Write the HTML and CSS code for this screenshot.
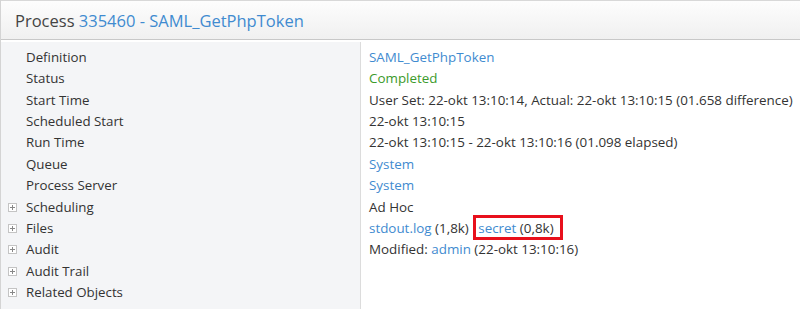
FILE: index.html
```html
<!DOCTYPE html>
<html lang="en">
<head>
  <meta charset="UTF-8">
  <title>Process 335460</title>
  <link rel="stylesheet" href="styles.css">
</head>
<body>
  <div class="panel">
    <div class="panel-head">Process <a class="lnk">335460 - SAML_GetPhpToken</a></div>

    <div class="panel-body">
      <!-- labels -->
      <div class="labels">
        <div class="row">Definition</div>
        <div class="row">Status</div>
        <div class="row">Start Time</div>
        <div class="row">Scheduled Start</div>
        <div class="row">Run Time</div>
        <div class="row">Queue</div>
        <div class="row">Process Server</div>
        <div class="row exp"><span class="plus"></span>Scheduling</div>
        <div class="row exp"><span class="plus"></span>Files</div>
        <div class="row exp"><span class="plus"></span>Audit</div>
        <div class="row exp"><span class="plus"></span>Audit Trail</div>
        <div class="row exp"><span class="plus"></span>Related Objects</div>
      </div>

      <!-- values -->
      <div class="values">
        <div class="row"><a class="lnk">SAML_GetPhpToken</a></div>
        <div class="row ok">Completed</div>
        <div class="row">User Set: 22-okt 13:10:14, Actual: 22-okt 13:10:15 (01.658 difference)</div>
        <div class="row">22-okt 13:10:15</div>
        <div class="row">22-okt 13:10:15 - 22-okt 13:10:16 (01.098 elapsed)</div>
        <div class="row"><a class="lnk">System</a></div>
        <div class="row"><a class="lnk">System</a></div>
        <div class="row">Ad Hoc</div>
        <div class="row"><a class="lnk">stdout.log</a> (1,8k) <span class="mark"><a class="lnk">secret</a> (0,8k)</span></div>
        <div class="row">Modified: <a class="lnk">admin</a> (22-okt 13:10:16)</div>
      </div>
    </div>
  </div>
</body>
</html>
```

FILE: styles.css
```css
* {
  box-sizing: border-box;
}

body {
  margin: 0;
  font-family: "Open Sans", "Liberation Sans", sans-serif;
  font-size: 13.3px;
  color: #333;
  background: #fff;
}

.panel {
  border-left: 1px solid #d4d4d4;
  height: 309px;
}

.panel-head {
  height: 40px;
  padding: 8px 14px 0;
  border-top: 1px solid #d8d8d8;
  border-bottom: 1px solid #c8c8c8;
  background: linear-gradient(#fdfdfd, #f0f0f0);
  font-size: 16.5px;
  color: #444;
}

.lnk {
  color: #3f8bd0;
  text-decoration: none;
}

.panel-body {
  display: flex;
  margin-top: 2px;
  height: 267px;
}

.labels {
  width: 360px;
  background-color: #f4f5f7;
  border-right: 1px solid #dcdcdc;
  padding: 5px 0 0 25px;
}

.values {
  flex: 1;
  padding: 5px 0 0 8px;
}

.values .row {
  font-size: 13.4px;
}

.row {
  height: 21.36px;
  line-height: 21.36px;
  white-space: nowrap;
}

.exp {
  position: relative;
}

.plus {
  position: absolute;
  left: -18px;
  top: 6px;
  width: 9px;
  height: 9px;
  border: 1px solid #c4c4c4;
  background: #fff;
}

.plus::before,
.plus::after {
  content: "";
  position: absolute;
  background: #888;
}

.plus::before {
  left: 1px;
  top: 3px;
  width: 5px;
  height: 1px;
}

.plus::after {
  left: 3px;
  top: 1px;
  width: 1px;
  height: 5px;
}

.ok {
  color: #3b9a2b;
}

.mark {
  border: 3px solid #e8101c;
  padding: 1px 6px 0 2px;
  margin-left: 1px;
}
```
